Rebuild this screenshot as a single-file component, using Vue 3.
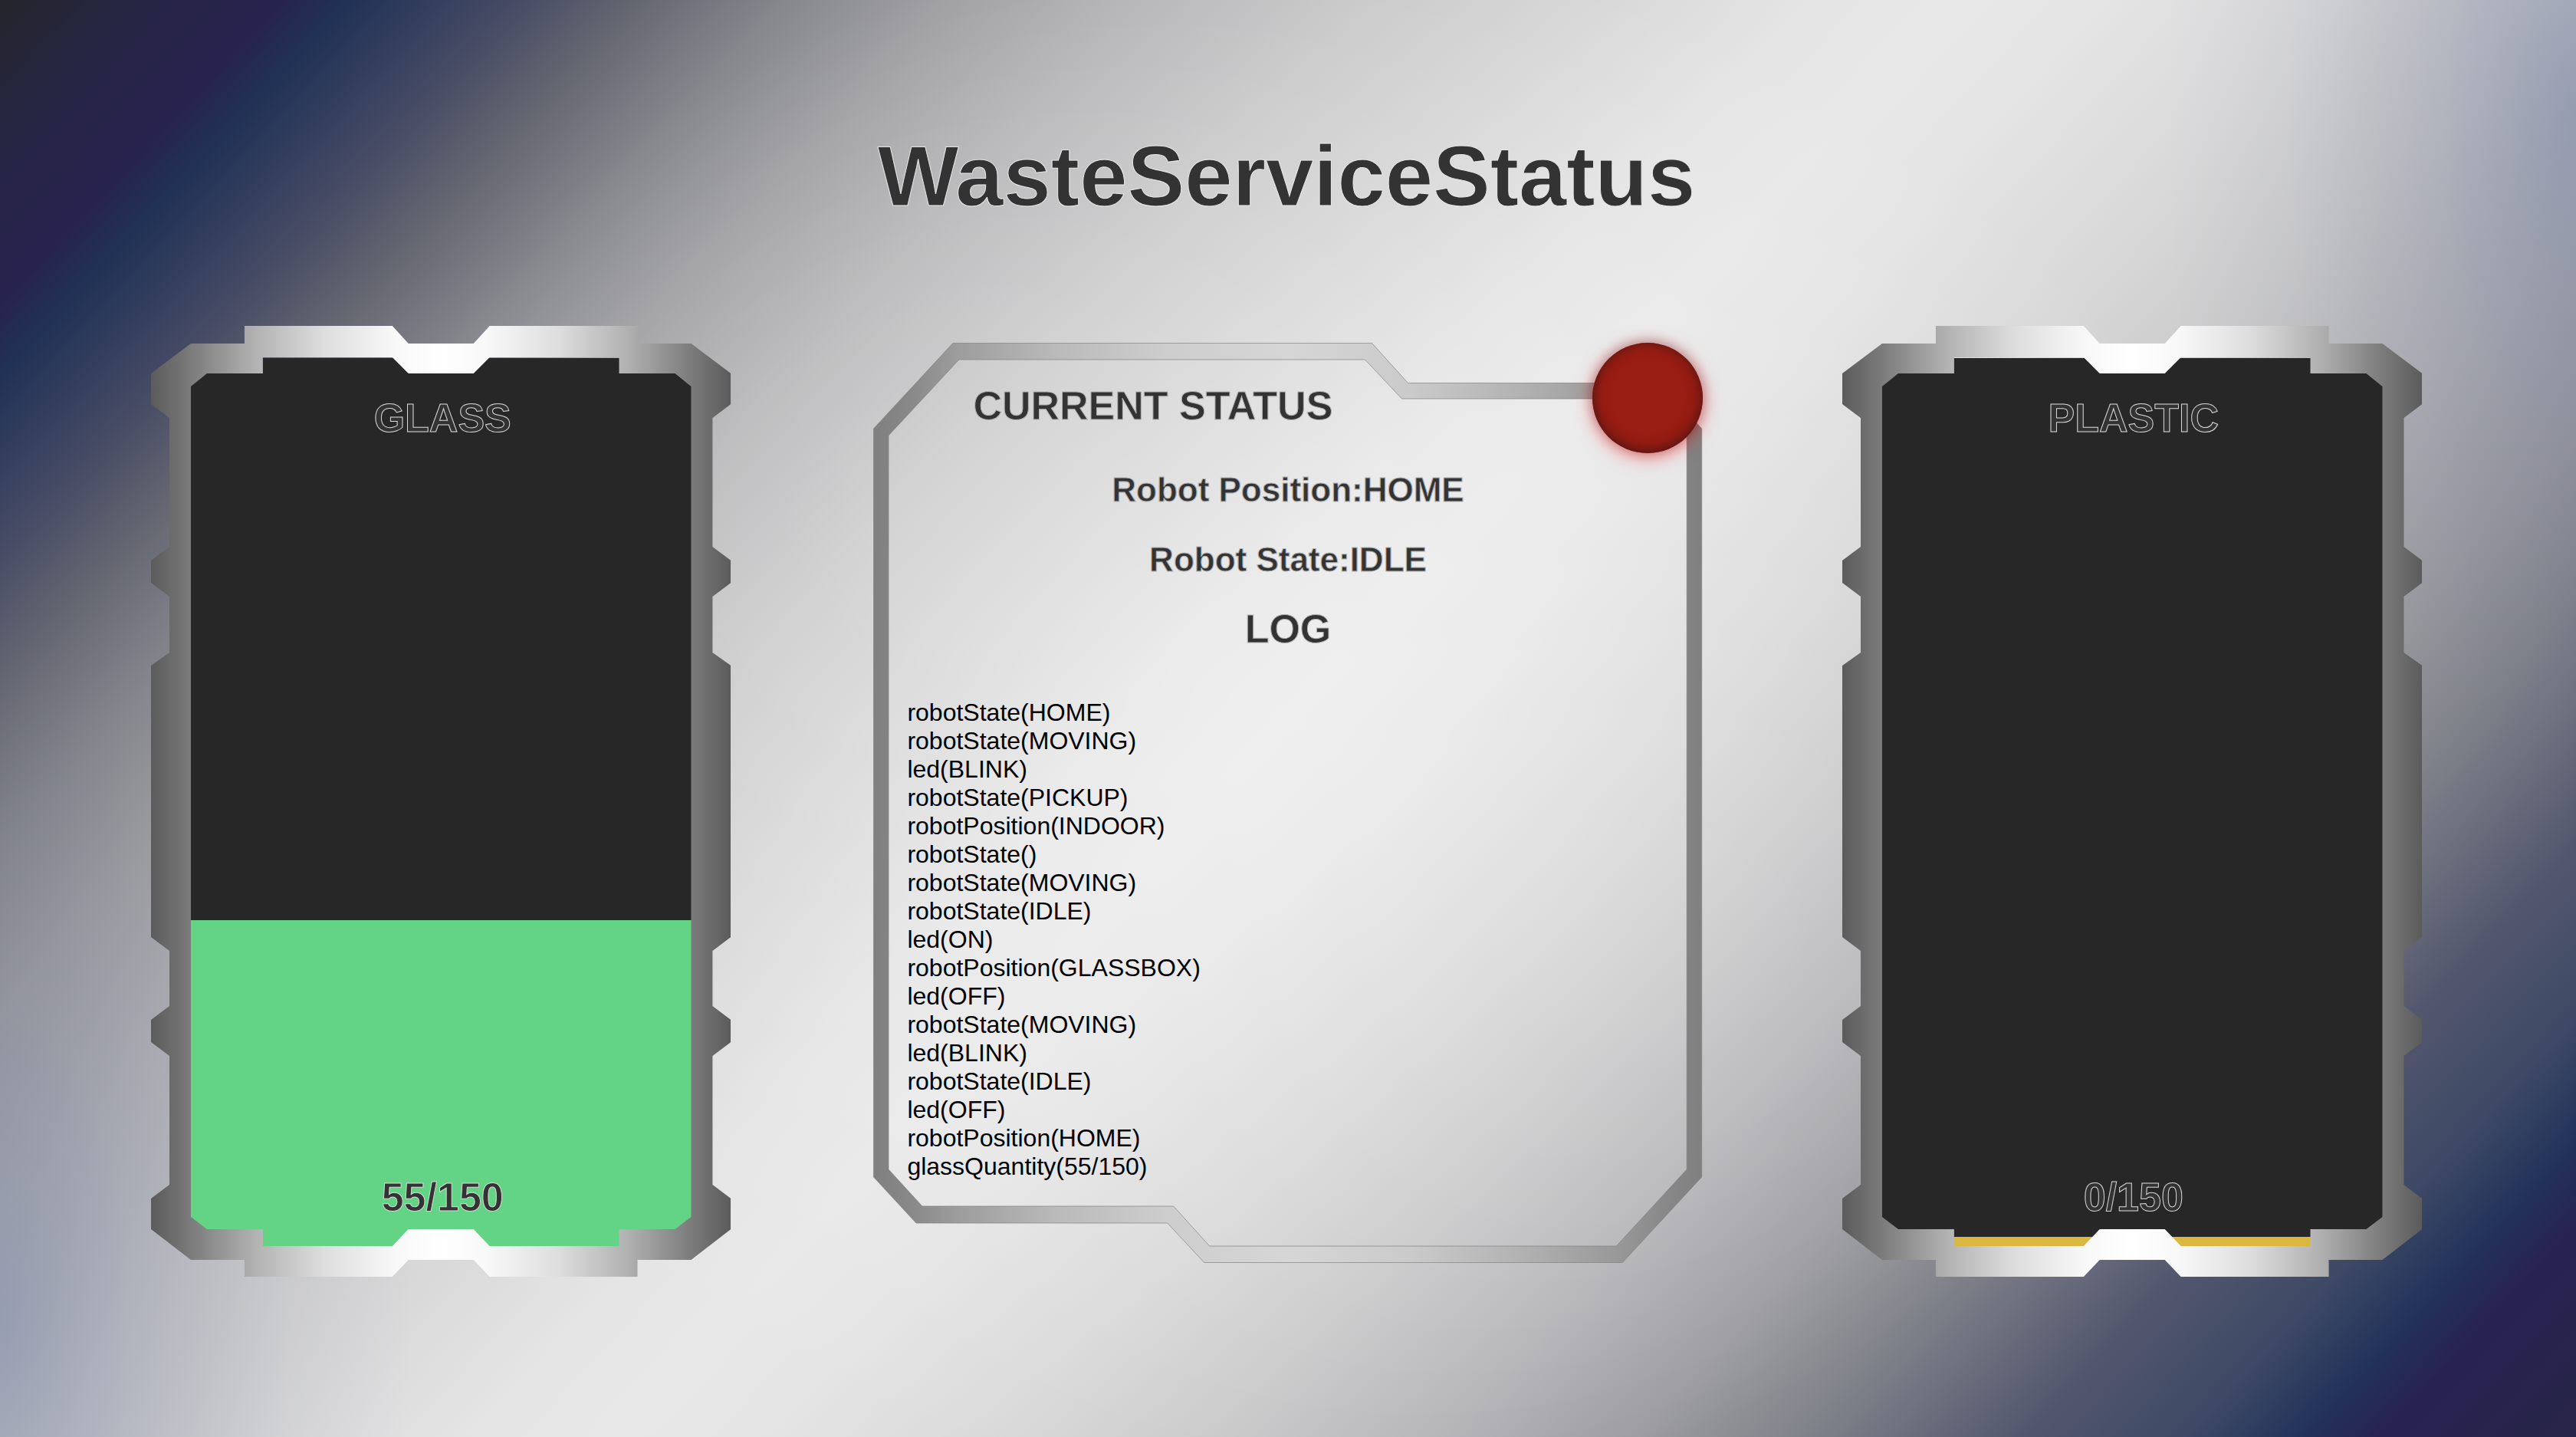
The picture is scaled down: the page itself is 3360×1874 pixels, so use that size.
<script setup>
const containers = [
  { id: 'glass', name: 'GLASS', amount: 55, capacity: 150, color: '#63d385' },
  { id: 'plastic', name: 'PLASTIC', amount: 0, capacity: 150, color: '#dab83f' }
]

const robot = { position: 'HOME', state: 'IDLE' }

const log = [
  'robotState(HOME)',
  'robotState(MOVING)',
  'led(BLINK)',
  'robotState(PICKUP)',
  'robotPosition(INDOOR)',
  'robotState()',
  'robotState(MOVING)',
  'robotState(IDLE)',
  'led(ON)',
  'robotPosition(GLASSBOX)',
  'led(OFF)',
  'robotState(MOVING)',
  'led(BLINK)',
  'robotState(IDLE)',
  'led(OFF)',
  'robotPosition(HOME)',
  'glassQuantity(55/150)'
]

// An empty container keeps a thin line of its colour visible.
const level = (c) => Math.max(1, (c.amount / c.capacity) * 100)
</script>

<template>
  <main class="page">
    <h1 class="title">WasteServiceStatus</h1>
    <div class="board">
      <section v-for="c in containers" :key="c.id" class="container" :class="c.id">
        <div class="tank">
          <div class="fill" :style="{ height: level(c) + '%', background: c.color }"></div>
        </div>
        <svg class="frame" viewBox="0 0 757 1240" preserveAspectRatio="none" aria-hidden="true">
          <defs>
            <linearGradient :id="'metal-' + c.id">
              <stop offset="0" stop-color="#5b5b5b" />
              <stop offset="0.07" stop-color="#7c7c7c" />
              <stop offset="0.18" stop-color="#b2b2b2" />
              <stop offset="0.3" stop-color="#dedede" />
              <stop offset="0.42" stop-color="#f8f8f8" />
              <stop offset="0.5" stop-color="#ffffff" />
              <stop offset="0.58" stop-color="#f8f8f8" />
              <stop offset="0.7" stop-color="#dedede" />
              <stop offset="0.82" stop-color="#b2b2b2" />
              <stop offset="0.93" stop-color="#7c7c7c" />
              <stop offset="1" stop-color="#5b5b5b" />
            </linearGradient>
          </defs>
          <path
            :fill="`url(#metal-${c.id})`"
            fill-rule="evenodd"
            d="M122 0H315L336 23H421L442 0H635V23H705L757 62V102L733 120V288L757 306V335L733 353V426L757 443V797L733 815V887L757 905V934L733 952V1120L757 1138V1178L705 1218H635V1240H442L421 1218H336L315 1240H122V1218H52L0 1178V1138L24 1120V952L0 934V905L24 887V815L0 797V443L24 426V353L0 335V306L24 288V120L0 102V62L52 23H122Z
               M146 41V62H73L52 79V1162L73 1178H146V1200H315L336 1178H421L442 1200H611V1178H684L705 1162V79L684 62H611V41H442L421 62H336L315 41Z"
          />
        </svg>
        <h2 class="label">{{ c.name }}</h2>
        <p class="label">{{ c.amount }}/{{ c.capacity }}</p>
      </section>

      <section class="status">
        <svg class="frame" viewBox="0 0 1082 1200" preserveAspectRatio="none" aria-hidden="true">
          <defs>
            <linearGradient id="metal-status">
              <stop offset="0" stop-color="#808080" />
              <stop offset="0.04" stop-color="#878787" />
              <stop offset="0.1" stop-color="#9c9c9c" />
              <stop offset="0.22" stop-color="#bababa" />
              <stop offset="0.35" stop-color="#cdcdcd" />
              <stop offset="0.5" stop-color="#d6d6d6" />
              <stop offset="0.65" stop-color="#cacaca" />
              <stop offset="0.78" stop-color="#b2b2b2" />
              <stop offset="0.9" stop-color="#989898" />
              <stop offset="0.96" stop-color="#878787" />
              <stop offset="1" stop-color="#808080" />
            </linearGradient>
          </defs>
          <path
            fill="url(#metal-status)"
            stroke="#828282"
            stroke-opacity="0.7"
            fill-rule="evenodd"
            d="M104 0.5H651L698 52.5H1027L1081.5 112V1088L978 1199.5H432L384 1148H56L0.5 1088V112Z
               M112 22L20 121V1078L64 1126H392L439 1178H970L1062 1078V121L1017 73H690L642 22Z"
          />
        </svg>
        <span class="led" role="img" aria-label="Led off"></span>
        <h2 class="heading current">CURRENT STATUS</h2>
        <h3 class="fact">Robot Position:{{ robot.position }}</h3>
        <h3 class="fact">Robot State:{{ robot.state }}</h3>
        <h2 class="heading">LOG</h2>
        <ul class="log">
          <li v-for="(line, i) in log" :key="i">{{ line }}</li>
        </ul>
      </section>
    </div>
  </main>
</template>

<style>
body {
  margin: 0;
}
</style>

<style scoped>
.page {
  box-sizing: border-box;
  min-height: 100vh;
  padding: 166px 201px 100px 197px;
  font-family: "Liberation Sans", Arial, sans-serif;
  color: #333;
  background:
    radial-gradient(ellipse 38% 55% at 50% 50%, rgba(255, 255, 255, 0.32), rgba(255, 255, 255, 0)),
    radial-gradient(
      ellipse 16% 62% at 0% 92%,
      rgba(80, 98, 150, 0.36),
      rgba(90, 100, 140, 0.2) 35%,
      rgba(100, 105, 130, 0.06) 70%,
      rgba(110, 110, 125, 0)
    ),
    radial-gradient(
      ellipse 16% 62% at 100% 8%,
      rgba(80, 98, 150, 0.36),
      rgba(90, 100, 140, 0.2) 35%,
      rgba(100, 105, 130, 0.06) 70%,
      rgba(110, 110, 125, 0)
    ),
    linear-gradient(
      133deg,
      #25252c 0%,
      #252540 3%,
      #27224e 7%,
      #213256 9%,
      #454a64 13%,
      #62646f 16%,
      #86878d 20%,
      #a0a0a3 24%,
      #b6b6b8 29%,
      #cacacb 35%,
      #d8d8d9 41%,
      #e4e4e5 46%,
      #e8e8e9 50%,
      #e4e4e5 54%,
      #d8d8d9 60%,
      #cacacb 65%,
      #b4b4b7 71%,
      #9c9ca1 76%,
      #82848b 80%,
      #52566d 86%,
      #3d4965 90%,
      #22325a 93%,
      #282252 95%,
      #272547 100%
    );
}

.title {
  margin: 0 0 131px;
  font-size: 112px;
  line-height: 128px;
  font-weight: 700;
  text-align: center;
  -webkit-text-stroke: 1px #e8e8e8;
}

.board {
  display: grid;
  grid-template-columns: 757fr 1082fr 757fr;
  grid-template-areas: "glass status plastic";
  gap: 184px;
}

.container {
  position: relative;
  box-sizing: border-box;
  display: flex;
  flex-direction: column;
  justify-content: space-between;
  padding: 90px 0 74px 4px;
  text-align: center;
}

.glass {
  grid-area: glass;
}

.plastic {
  grid-area: plastic;
}

.tank {
  position: absolute;
  inset: 42px 30px 40px;
  display: flex;
  align-items: flex-end;
  background: #272727;
}

.fill {
  width: 100%;
}

.frame {
  position: absolute;
  inset: 0;
  width: 100%;
  height: 100%;
}

.label,
.heading {
  position: relative;
  margin: 0;
  font-size: 52px;
  line-height: 60px;
  font-weight: 700;
  -webkit-text-stroke: 1px #b4b4b4;
}

.label {
  -webkit-text-stroke-color: #d8d8d8;
}

.status {
  grid-area: status;
  position: relative;
  margin: 22px -2px 18px 2px;
  padding: 52px 44px 107px;
  text-align: center;
}

.led {
  position: absolute;
  top: 0;
  right: 0;
  width: 144px;
  height: 144px;
  border-radius: 50%;
  background: #991d12;
  box-shadow:
    rgba(0, 0, 0, 0.2) 0 -2px 14px 2px,
    inset #441313 0 -2px 18px,
    rgba(255, 0, 0, 0.5) 0 4px 24px;
}

.current {
  padding-left: 86px;
  text-align: left;
}

.fact {
  position: relative;
  margin: 54px 0 0;
  font-size: 44px;
  line-height: 52px;
  font-weight: 700;
  -webkit-text-stroke: 1px #b4b4b4;
}

.fact + .fact {
  margin-top: 39px;
}

.fact + .heading {
  margin-top: 34px;
}

.log {
  position: relative;
  margin: 61px 0 0;
  padding: 0;
  list-style: none;
  font-size: 32px;
  line-height: 37px;
  color: #000;
  text-align: left;
}
</style>
